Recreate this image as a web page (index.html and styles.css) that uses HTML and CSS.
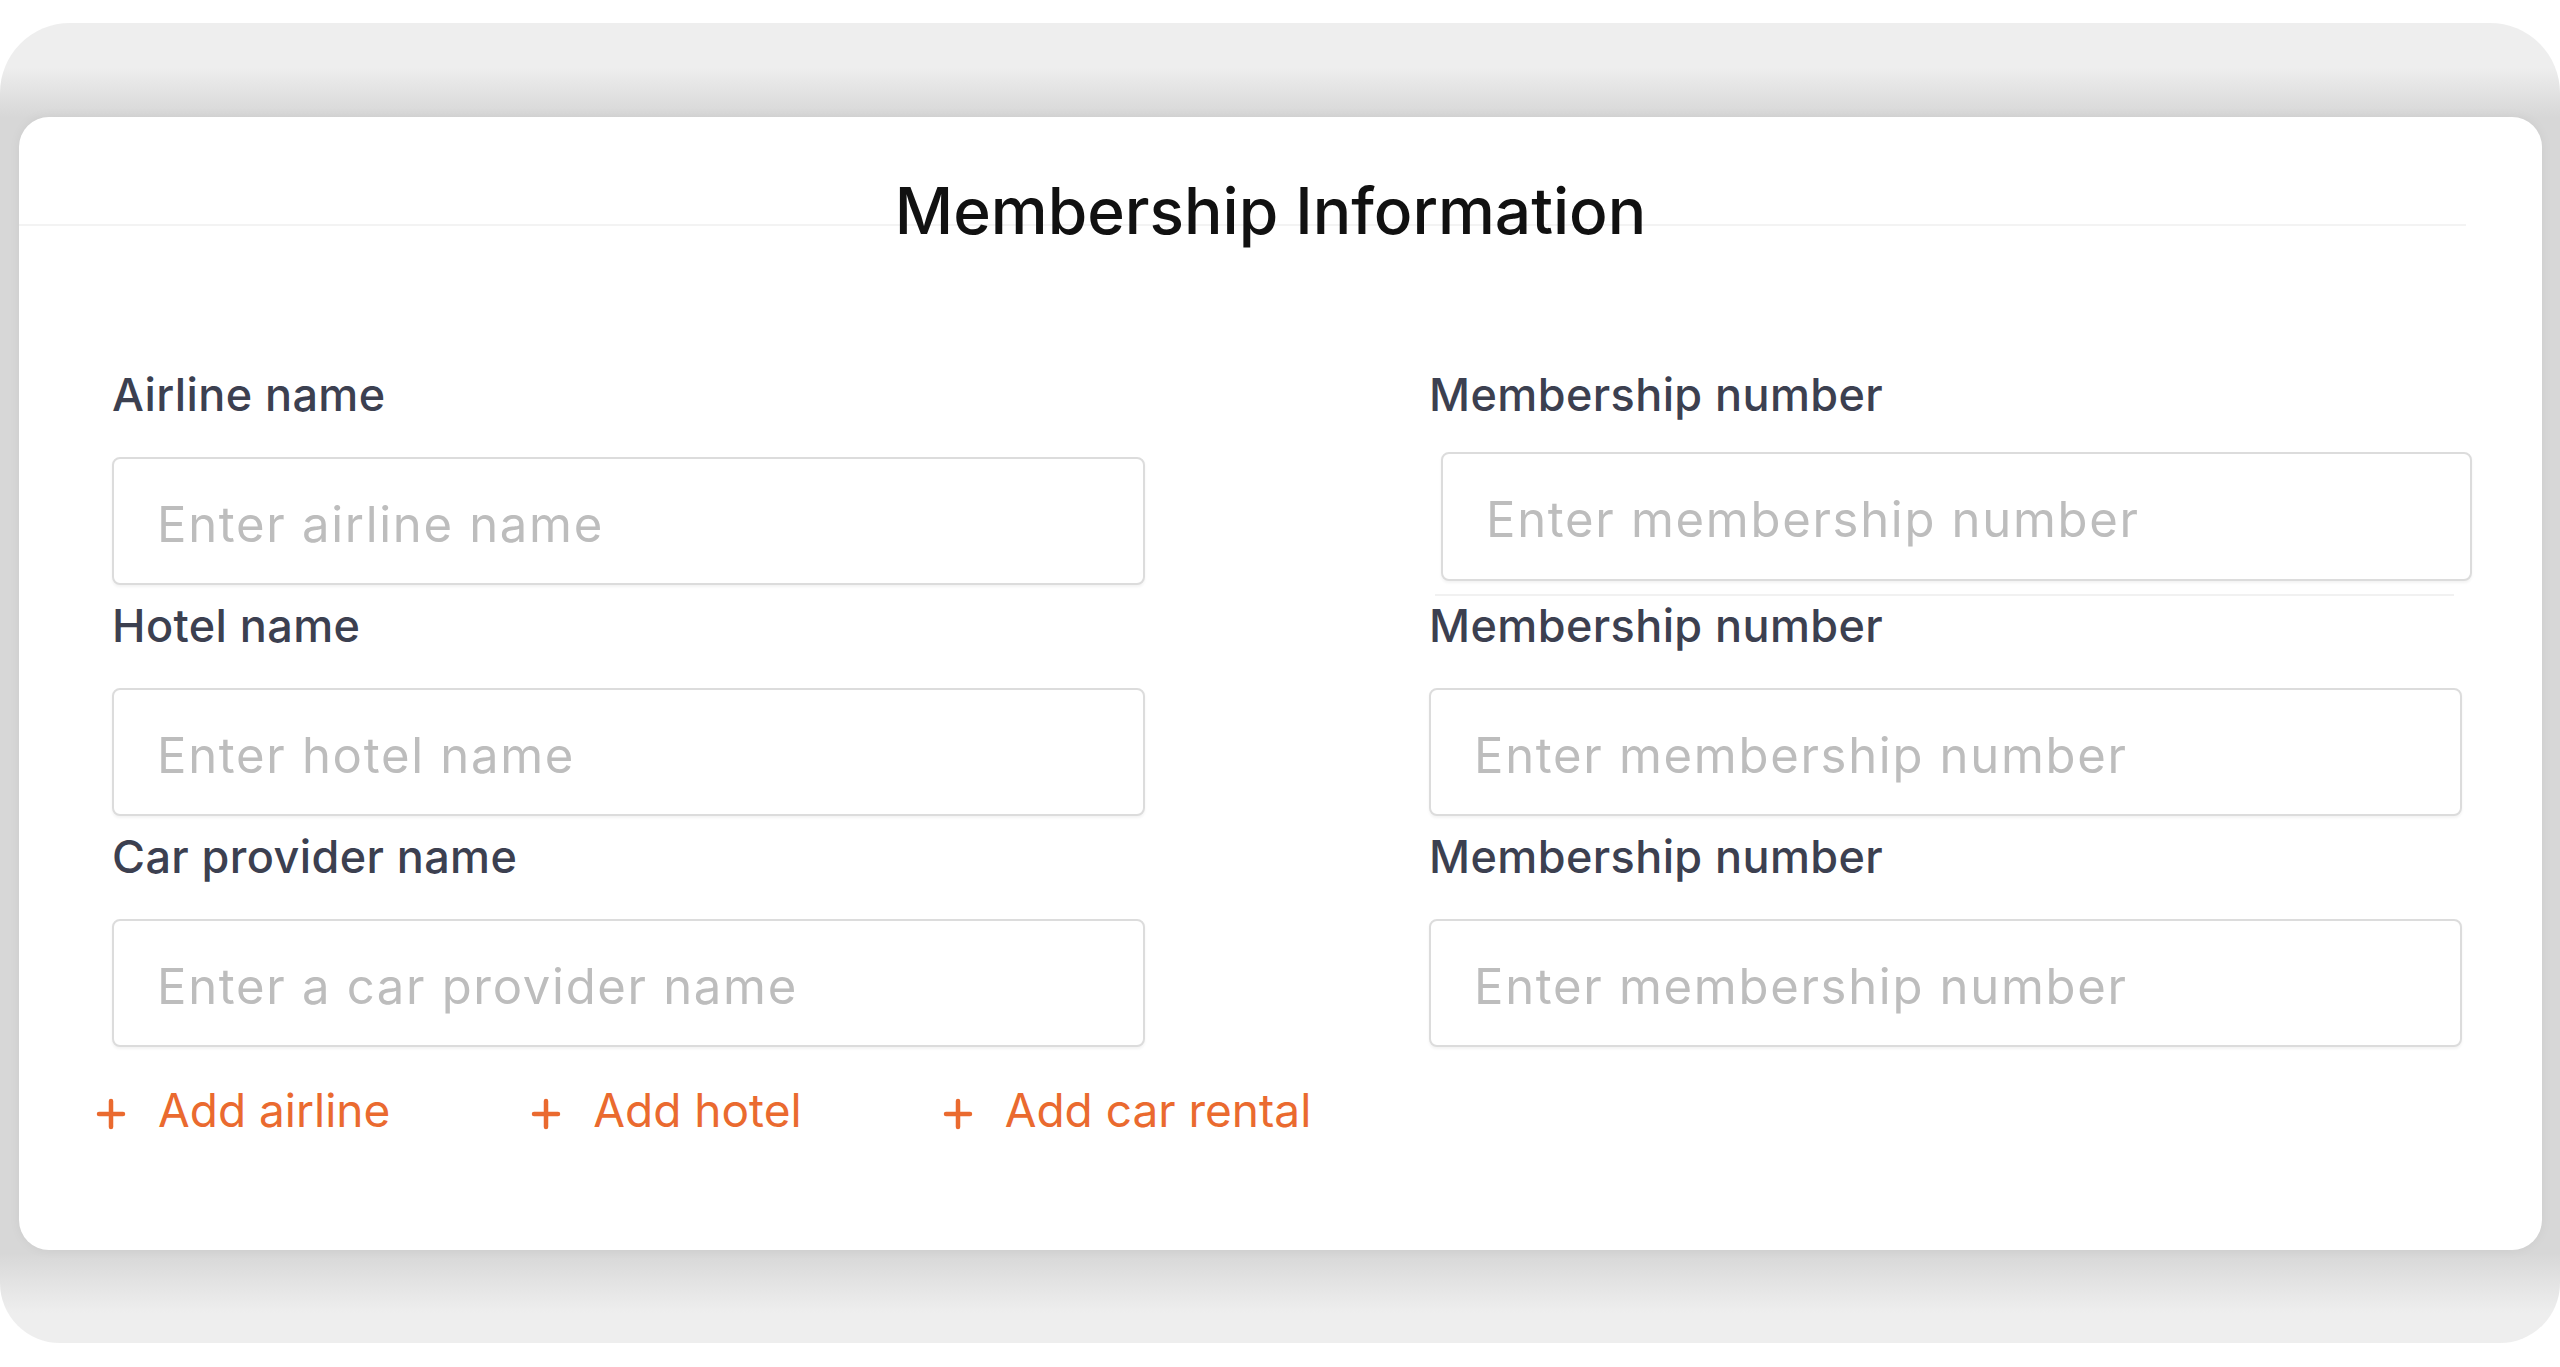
FILE: index.html
```html
<!DOCTYPE html>
<html lang="en">
<head>
<meta charset="utf-8">
<title>Membership Information</title>
<link rel="stylesheet" href="styles.css">
</head>
<body>
<div class="frame">
  <section class="card">
    <header class="card-head">
      <h1 class="title">Membership Information</h1>
    </header>
    <div class="form">
      <div class="col">
        <div class="field">
          <label class="label">Airline name</label>
          <input class="input" type="text" placeholder="Enter airline name">
        </div>
        <div class="field">
          <label class="label">Hotel name</label>
          <input class="input" type="text" placeholder="Enter hotel name">
        </div>
        <div class="field">
          <label class="label">Car provider name</label>
          <input class="input" type="text" placeholder="Enter a car provider name">
        </div>
      </div>
      <div class="col">
        <div class="field">
          <label class="label">Membership number</label>
          <input class="input input-shifted" type="text" placeholder="Enter membership number">
        </div>
        <div class="rule"></div>
        <div class="field">
          <label class="label">Membership number</label>
          <input class="input" type="text" placeholder="Enter membership number">
        </div>
        <div class="field">
          <label class="label">Membership number</label>
          <input class="input" type="text" placeholder="Enter membership number">
        </div>
      </div>
    </div>
    <div class="actions">
      <button class="add" type="button">
        <svg class="plus" viewBox="0 0 30 32" width="30" height="32"><path d="M15 3V29M3 16H27" fill="none" stroke="currentColor" stroke-width="4.5" stroke-linecap="round"/></svg>
        <span>Add airline</span>
      </button>
      <button class="add" type="button">
        <svg class="plus" viewBox="0 0 30 32" width="30" height="32"><path d="M15 3V29M3 16H27" fill="none" stroke="currentColor" stroke-width="4.5" stroke-linecap="round"/></svg>
        <span>Add hotel</span>
      </button>
      <button class="add" type="button">
        <svg class="plus" viewBox="0 0 30 32" width="30" height="32"><path d="M15 3V29M3 16H27" fill="none" stroke="currentColor" stroke-width="4.5" stroke-linecap="round"/></svg>
        <span>Add car rental</span>
      </button>
    </div>
  </section>
</div>
</body>
</html>
```

FILE: styles.css
```css
* {
  box-sizing: border-box;
}

html,
body {
  margin: 0;
  background: #ffffff;
}

body {
  font-family: Inter, "Noto Sans", "Liberation Sans", sans-serif;
  padding-top: 23px;
  height: 1367px;
  overflow: hidden;
}

.frame {
  width: 2560px;
  height: 1320px;
  border-radius: 70px 70px 60px 60px;
  padding: 94px 18px 0 19px;
  background: linear-gradient(
    to bottom,
    #eeeeee 0px,
    #eeeeee 44px,
    #d7d7d7 94px,
    #d7d7d7 1230px,
    #e4e4e4 1262px,
    #eeeeee 1290px,
    #eeeeee 100%
  );
}

.card {
  height: 1133px;
  background: #ffffff;
  border-radius: 30px;
  box-shadow: 0 0 12px rgba(0, 0, 0, 0.05);
}

.card-head {
  height: 109px;
  margin-right: 76px;
  padding: 62px 0 0 56px;
  border-bottom: 2px solid #f3f3f3;
}

.title {
  margin: 0;
  font-size: 64px;
  line-height: 64px;
  font-weight: 500;
  color: #111111;
  text-align: center;
}

.form {
  display: flex;
  gap: 284px;
  margin-top: 142px;
  padding-left: 93px;
}

.col {
  width: 1033px;
  display: flex;
  flex-direction: column;
}

.field + .field {
  margin-top: 14px;
}

.label {
  display: block;
  font-size: 45px;
  line-height: 54px;
  font-weight: 500;
  letter-spacing: 0.4px;
  color: #3c4050;
}

.input {
  display: block;
  width: 100%;
  height: 128px;
  margin: 35px 0 0 0;
  padding: 6px 0 0 43px;
  border: 2px solid #dcdcdc;
  border-radius: 8px;
  background: #ffffff;
  font-family: Inter, "Noto Sans", "Liberation Sans", sans-serif;
  font-size: 49px;
  letter-spacing: 1.7px;
  color: #333333;
  box-shadow: 0 2px 3px rgba(0, 0, 0, 0.05);
  outline: none;
}

.input::placeholder {
  color: #bdbdbd;
}

.input-shifted {
  width: 1031px;
  height: 129px;
  margin-top: 30px;
  margin-left: 12px;
}

.rule {
  width: 1019px;
  height: 2px;
  margin: 13px 0 0 6px;
  background: #f1f1f1;
}

.rule + .field {
  margin-top: 3px;
}

.actions {
  display: flex;
  gap: 141px;
  margin: 35px 0 0 77px;
}

.add {
  display: flex;
  align-items: center;
  gap: 32px;
  padding: 0;
  border: 0;
  background: none;
  font-family: Inter, "Noto Sans", "Liberation Sans", sans-serif;
  font-size: 46px;
  line-height: 56px;
  font-weight: 400;
  color: #ea6a2f;
  cursor: pointer;
}

.plus {
  display: block;
  margin-top: 8px;
}
```
